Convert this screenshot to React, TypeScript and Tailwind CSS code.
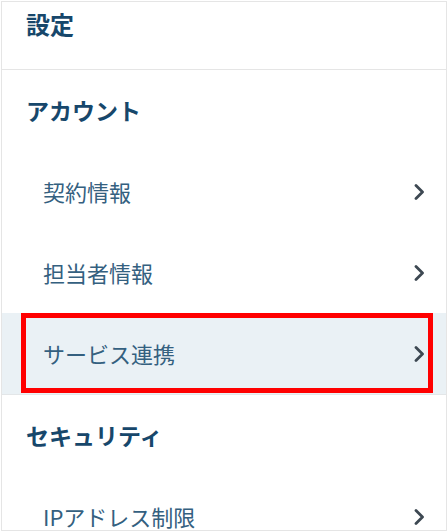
import React from "react";

const Chevron = () => (
  <svg width="14" height="16" viewBox="0 0 14 16" className="shrink-0">
    <polyline points="4,1.5 10.5,8 4,14.5" fill="none" stroke="#3d4852" strokeWidth="2.8" strokeLinecap="round" strokeLinejoin="round" />
  </svg>
);

const Item = ({ label, selected }: { label: string; selected?: boolean }) => (
  <div
    className={
      "relative flex h-[81px] items-center justify-between pl-[41px] pr-[20px] " +
      (selected ? "bg-[#eaf1f5] border-b border-[#e3e6e8] h-[82px]" : "")
    }
  >
    <span className="text-[22px] text-[#34607f]">{label}</span>
    <Chevron />
    {selected && (
      <div className="pointer-events-none absolute left-[19px] right-[13px] top-0 bottom-[1px] border-[5px] border-[#ff0000]" />
    )}
  </div>
);

const Header = ({ label }: { label: string }) => (
  <div className="flex h-[81px] items-center pl-[24px]">
    <span className="text-[23px] font-bold text-[#17476b]">{label}</span>
  </div>
);

export default function App() {
  return (
    <div className="h-[532px] w-[448px] bg-white p-px" style={{ fontFamily: '"Noto Sans CJK JP", "Noto Sans", sans-serif' }}>
      <div className="h-[530px] overflow-hidden border border-[#e5e5e5]">
        <div className="h-[68px] border-b border-[#e5e5e5] pl-[24px] pt-[6px]">
          <span className="text-[24px] font-bold leading-[32px] text-[#17476b]">設定</span>
        </div>
        <Header label="アカウント" />
        <Item label="契約情報" />
        <Item label="担当者情報" />
        <Item label="サービス連携" selected />
        <Header label="セキュリティ" />
        <Item label="IPアドレス制限" />
      </div>
    </div>
  );
}
